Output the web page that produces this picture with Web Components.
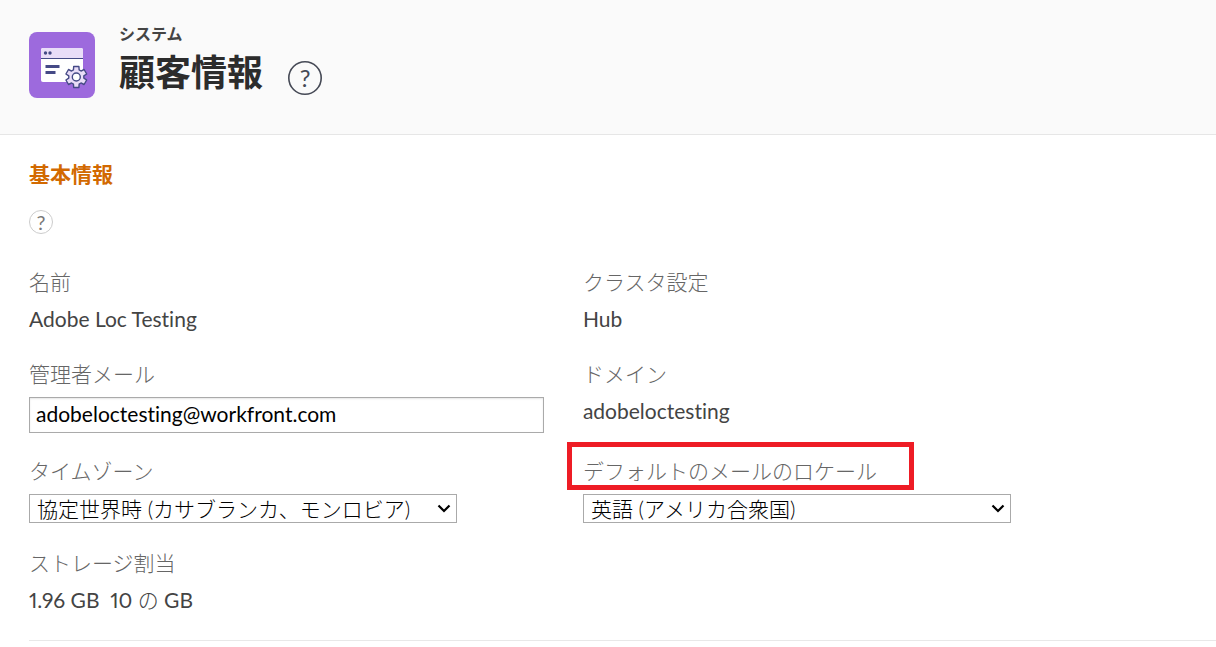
<!DOCTYPE html>
<html lang="ja">
<head>
<meta charset="utf-8">
<meta name="viewport" content="width=device-width, initial-scale=1">
<title>顧客情報</title>
<style>
  body {
    margin: 0;
    background: #fff;
    color: #444;
    font: 300 21px/28px Lato, "Noto Sans CJK JP", sans-serif;
    font-variant-ligatures: none;
    font-variant-numeric: proportional-nums;
  }
</style>
</head>
<body>
<customer-info-page></customer-info-page>

<script>
  class BaseElement extends HTMLElement {
    connectedCallback() {
      if (this.shadowRoot) return;
      this.attachShadow({ mode: "open" }).innerHTML = this.render();
    }
  }

  class HelpButton extends BaseElement {
    render() {
      const large = this.hasAttribute("large");
      const size = large ? 34 : 24;
      const stroke = large ? 1.6 : 1;
      return `<style>
        :host { display: block; width: 24px; height: 24px; color: #777; --ring: #ccc; --glyph: 20px; }
        :host([large]) { width: 34px; height: 34px; color: #454955; --ring: #454955; --glyph: 24px; }
        button {
          display: grid; place-items: center; width: 100%; height: 100%; padding: 0;
          border: 0; background: none; color: inherit; cursor: pointer;
          font: 400 var(--glyph)/1 Lato, sans-serif;
        }
        svg, span { grid-area: 1 / 1; }
        circle { fill: none; stroke: var(--ring); }
      </style><button type="button" aria-label="ヘルプ">
        <svg width="${size}" height="${size}" aria-hidden="true"><circle cx="${size / 2}" cy="${size / 2}" r="${(size - stroke) / 2}" stroke-width="${stroke}"/></svg>
        <span>?</span></button>`;
    }
  }

  class SystemIcon extends BaseElement {
    render() {
      const cog = [];
      [0, 60, 120, 180, 240, 300].forEach(a => {
        [[-22, 7.6], [-14, 10.8], [14, 10.8], [22, 7.6]].forEach(([d, r]) => {
          const t = (a + d) * Math.PI / 180;
          cog.push((47.3 + r * Math.sin(t)).toFixed(2) + "," + (45 - r * Math.cos(t)).toFixed(2));
        });
      });
      return `<style>
        :host { display: block; width: 66px; height: 66px; }
        svg { display: block; }
      </style>
      <svg width="66" height="66" viewBox="0 0 66 66" aria-hidden="true">
        <rect width="66" height="66" rx="8" fill="#9d6add"/>
        <rect x="12" y="16" width="42" height="34" rx="2" fill="#fff"/>
        <path d="M12 26v-8a2 2 0 0 1 2-2h38a2 2 0 0 1 2 2v8z" fill="#e9ddf8"/>
        <path d="M12 26.500h42" stroke="#454a86" stroke-width="1"/>
        <circle cx="16.500" cy="21" r="1.700" fill="#454a86"/>
        <circle cx="21" cy="21" r="1.700" fill="#454a86"/>
        <path d="M18 34.500h11M18 40.500h7" stroke="#454a86" stroke-width="3" stroke-linecap="square"/>
        <polygon points="${cog.join(" ")}" fill="#e9ddf8" stroke="#454a86" stroke-width="1.400" stroke-linejoin="round"/>
        <circle cx="47.300" cy="45" r="4" fill="#fff" stroke="#454a86" stroke-width="1.400"/>
      </svg>`;
    }
  }

  class PageHeader extends BaseElement {
    render() {
      return `<style>
        :host { display: flex; align-items: flex-start; box-sizing: border-box;
          min-height: 135px; padding: 24px 29px; background: #fafafa; border-bottom: 1px solid #e6e6e6; }
        system-icon { margin: 8px 24px 0 0; flex: none; }
        p { margin: 0; font-size: 16px; line-height: 20px; font-weight: 700; color: #444; }
        h1 { margin: 4px 0 0; font-size: 36px; line-height: 48px; font-weight: 700; color: #2c2c2c; }
        help-button { margin: 37px 0 0 25px; flex: none; }
      </style>
      <system-icon></system-icon>
      <div><p><slot name="area"></slot></p><h1><slot></slot></h1></div>
      <help-button large></help-button>`;
    }
  }

  /* A label above a plain value, a text box or a drop-down. */
  class InfoField extends BaseElement {
    render() {
      const kind = this.getAttribute("kind");
      const label = this.getAttribute("label");
      const value = this.getAttribute("value");
      const mark = this.hasAttribute("marked") ? '<i></i>' : "";
      let body;
      if (kind === "text") body = `<input id="c" type="email" value="${value}">`;
      else if (kind === "select") body = `<div class="select"><select id="c"><option>${value}</option></select>
        <svg width="14" height="10" viewBox="0 0 14 10" aria-hidden="true"><path d="M1.500 1.500L7 7l5.500-5.500" fill="none" stroke="#000" stroke-width="2.200"/></svg></div>`;
      else body = `<div class="value"><slot></slot></div>`;
      const head = kind ? `<label for="c">${label}</label>` : `<span class="label">${label}</span>`;
      return `<style>
        :host { display: block; min-width: 0; }
        .head { position: relative; margin-bottom: 8px; color: #666; line-height: 30px; }
        label, .label { display: block; }
        .control { min-height: 31px; }
        .value { white-space: pre-wrap; font-weight: 400; }
        input, select { display: block; box-sizing: border-box; margin: 0; border: 1px solid #aaa;
          border-radius: 0; background: #fff; color: #000; font: inherit; font-weight: 400;
          font-variant-ligatures: none; }
        input { width: calc(100% - 39px); height: 36px; padding: 0 6px 3px; box-shadow: inset 0 1px 2px #e6e6e6; }
        .select { position: relative; width: 428px; max-width: 100%; }
        select { appearance: none; width: 100%; height: 29px; padding: 0 24px 2px 7px; font-weight: 300; }
        .select svg { position: absolute; right: 6px; top: 10px; pointer-events: none; }
        i { position: absolute; left: -16px; top: -14px; box-sizing: border-box;
          width: 347px; height: 48px; border: 5px solid #ee1c25; pointer-events: none; }
      </style>
      <div class="head">${head}${mark}</div><div class="control">${body}</div>`;
    }
  }

  class InfoSection extends BaseElement {
    render() {
      return `<style>
        :host { display: block; padding: 23px 0 0 29px; }
        h2 { margin: 0 0 20px; font-size: 21px; line-height: 32px; font-weight: 700; color: #d26900; }
        .fields { display: grid; grid-template-columns: 7fr 8fr; row-gap: 23px;
          margin-top: 33px; padding-bottom: 23px; border-bottom: 1px solid #e8e8e8; }
      </style>
      <h2><slot name="title"></slot></h2>
      <help-button></help-button>
      <div class="fields"><slot></slot></div>`;
    }
  }

  class CustomerInfoPage extends BaseElement {
    render() {
      return `<style>:host { display: block; } .light { font-weight: 300; }</style>
      <page-header><span slot="area">システム</span>顧客情報</page-header>
      <main><info-section>
        <span slot="title">基本情報</span>
        <info-field label="名前">Adobe Loc Testing</info-field>
        <info-field label="クラスタ設定">Hub</info-field>
        <info-field kind="text" label="管理者メール" value="adobeloctesting@workfront.com"></info-field>
        <info-field label="ドメイン">adobeloctesting</info-field>
        <info-field kind="select" label="タイムゾーン" value="協定世界時 (カサブランカ、モンロビア)"></info-field>
        <info-field kind="select" marked label="デフォルトのメールのロケール" value="英語 (アメリカ合衆国)"></info-field>
        <info-field label="ストレージ割当">1.96 GB  10 <span class="light">の</span> GB</info-field>
      </info-section></main>`;
    }
  }

  customElements.define("help-button", HelpButton);
  customElements.define("system-icon", SystemIcon);
  customElements.define("page-header", PageHeader);
  customElements.define("info-field", InfoField);
  customElements.define("info-section", InfoSection);
  customElements.define("customer-info-page", CustomerInfoPage);
</script>
</body>
</html>
